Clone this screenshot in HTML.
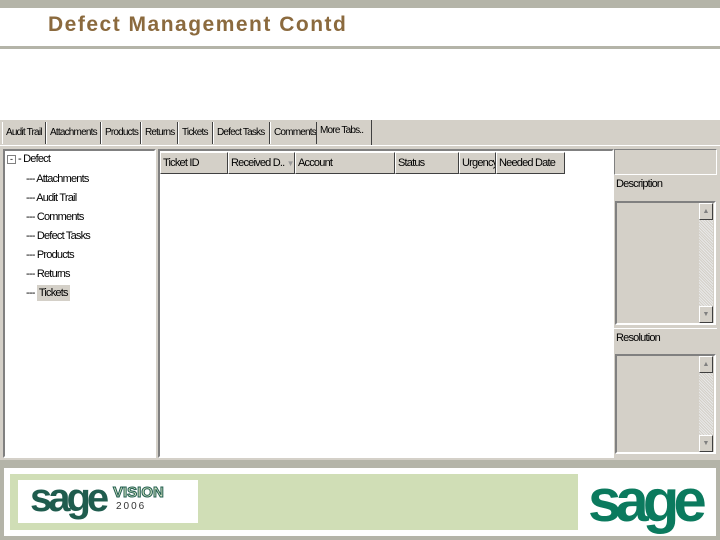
<!DOCTYPE html>
<html><head><style>
body{margin:0;width:720px;height:540px;position:relative;background:#fff;font-family:"Liberation Sans",sans-serif;overflow:hidden}
.a{position:absolute;box-sizing:border-box}
.t{font-size:11px;letter-spacing:-0.8px;color:#000;white-space:nowrap}
.tab{position:absolute;top:122px;height:22px;border-left:1px solid #fff;border-right:1px solid #404040;font-size:10px;letter-spacing:-0.8px;line-height:22px;padding-left:3px;box-sizing:border-box;white-space:nowrap;overflow:hidden}
.hd{position:absolute;top:152px;height:22px;background:#d4d0c8;border:1px solid;border-color:#fff #404040 #404040 #fff;font-size:11px;letter-spacing:-0.8px;line-height:20px;padding-left:2px;box-sizing:border-box;white-space:nowrap;overflow:hidden}
.tr{position:absolute;left:26px;font-size:11px;letter-spacing:-0.8px;white-space:nowrap}
.sunk{border:2px solid;border-color:#808080 #fff #fff #808080}
.sb{position:absolute;right:1px;width:14px;background:repeating-linear-gradient(45deg,#e8e8e8 0 1px,#d4d0c8 1px 2px)}
.btn{position:absolute;left:0;width:14px;height:17px;background:#d4d0c8;border:1px solid;border-color:#fff #404040 #404040 #fff;box-sizing:border-box;font-size:7px;text-align:center;line-height:15px;color:#808080}
</style></head><body>
<div class="a" style="left:0;top:0;width:720px;height:8px;background:#b4b4a8"></div>
<div class="a" style="left:48px;top:13px;font-size:21px;font-weight:bold;color:#8b6a3e;letter-spacing:1.5px;white-space:nowrap">Defect Management Contd</div>
<div class="a" style="left:0;top:46px;width:720px;height:3px;background:#b4b4a8"></div>

<div class="a" style="left:0;top:120px;width:720px;height:342px;background:#d4d0c8"></div>
<div class="tab" style="left:2px;width:44px">Audit Trail</div>
<div class="tab" style="left:46px;width:55px">Attachments</div>
<div class="tab" style="left:101px;width:40px">Products</div>
<div class="tab" style="left:141px;width:37px">Returns</div>
<div class="tab" style="left:178px;width:35px">Tickets</div>
<div class="tab" style="left:213px;width:57px">Defect Tasks</div>
<div class="tab" style="left:270px;width:47px">Comments</div>
<div class="tab" style="left:317px;width:55px;top:120px;height:25px;border-left:none;line-height:22px">More Tabs..</div>
<div class="a" style="left:0;top:145px;width:720px;height:1px;background:#fff"></div>

<div class="a sunk" style="left:3px;top:149px;width:153px;height:309px;background:#fff"></div>
<div class="a" style="left:7px;top:155px;width:9px;height:9px;border:1px solid #808080;font-size:9px;line-height:7px;text-align:center">-</div>
<div class="a t" style="left:18px;top:153px">- Defect</div>
<div class="tr" style="top:173px">--- Attachments</div>
<div class="tr" style="top:192px">--- Audit Trail</div>
<div class="tr" style="top:211px">--- Comments</div>
<div class="tr" style="top:230px">--- Defect Tasks</div>
<div class="tr" style="top:249px">--- Products</div>
<div class="tr" style="top:268px">--- Returns</div>
<div class="tr" style="top:287px">--- <span style="background:#d4d0c8;padding:2px 2px">Tickets</span></div>

<div class="a sunk" style="left:158px;top:149px;width:456px;height:309px;background:#fff"></div>
<div class="hd" style="left:160px;width:68px">Ticket ID</div>
<div class="hd" style="left:228px;width:67px">Received D.. <span style="color:#999;font-size:8px">▼</span></div>
<div class="hd" style="left:295px;width:100px">Account</div>
<div class="hd" style="left:395px;width:64px">Status</div>
<div class="hd" style="left:459px;width:37px">Urgency</div>
<div class="hd" style="left:496px;width:69px">Needed Date</div>

<div class="a" style="left:614px;top:149px;width:103px;height:26px;border:1px solid;border-color:#808080 #fff #fff #808080"></div>
<div class="a t" style="left:616px;top:178px">Description</div>
<div class="a sunk" style="left:615px;top:201px;width:101px;height:124px"><div class="sb" style="top:0;bottom:0"><div class="btn" style="top:0">▲</div><div class="btn" style="bottom:0">▼</div></div></div>
<div class="a" style="left:614px;top:328px;width:103px;height:1px;background:#fff"></div>
<div class="a t" style="left:616px;top:332px">Resolution</div>
<div class="a sunk" style="left:615px;top:354px;width:101px;height:100px"><div class="sb" style="top:0;bottom:0"><div class="btn" style="top:0">▲</div><div class="btn" style="bottom:0">▼</div></div></div>

<div class="a" style="left:0;top:460px;width:720px;height:80px;background:#b4b4a8"></div>
<div class="a" style="left:4px;top:468px;width:712px;height:68px;background:#fff"></div>
<div class="a" style="left:10px;top:474px;width:568px;height:56px;background:#d0deb6"></div>
<div class="a" style="left:18px;top:480px;width:180px;height:43px;background:#fff"></div>
<div class="a" style="left:30px;top:476px;font-size:40px;font-weight:bold;color:#1f5c4e;letter-spacing:-4px">sage</div>
<div class="a" style="left:113px;top:484px;font-size:15px;font-weight:bold;color:#cfe0c0;-webkit-text-stroke:1px #1f5c4e">VISION</div>
<div class="a" style="left:116px;top:501px;font-size:10px;letter-spacing:2px;color:#333">2006</div>
<div class="a" style="left:588px;top:466px;font-size:60px;font-weight:bold;color:#0b7a5e;letter-spacing:-6px;line-height:70px">sage</div>
</body></html>
